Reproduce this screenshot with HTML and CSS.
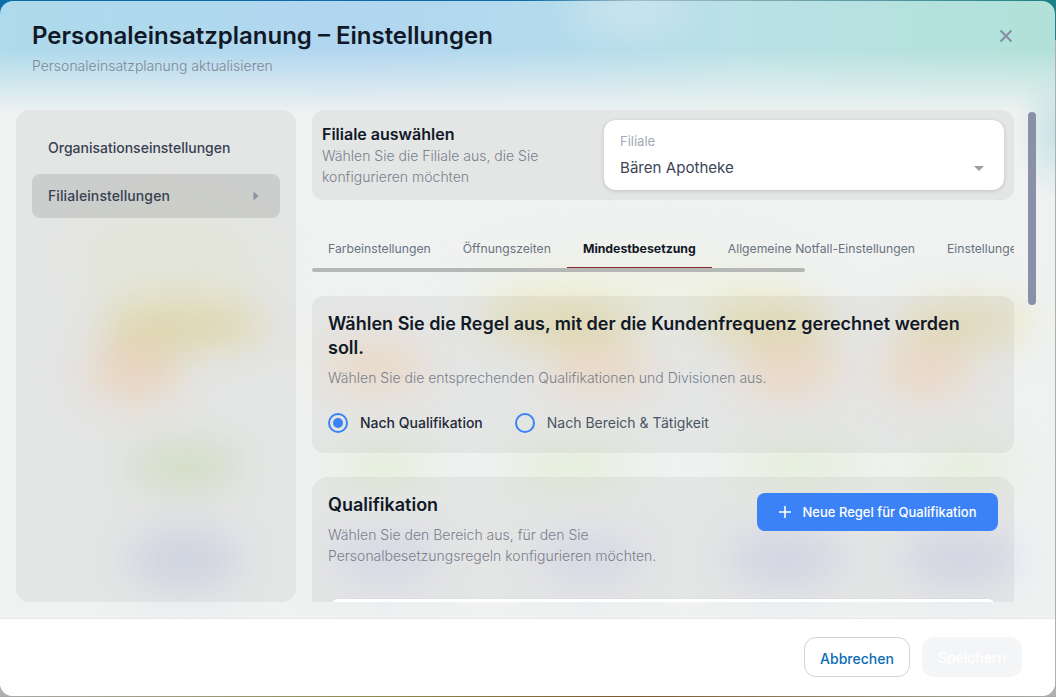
FILE: index.html
```html
<!DOCTYPE html>
<html lang="de">
<head>
<meta charset="utf-8">
<title>Personaleinsatzplanung – Einstellungen</title>
<link rel="stylesheet" href="styles.css">
</head>
<body>
<div class="modal">
  <header class="head">
    <div>
      <h1 class="title">Personaleinsatzplanung – Einstellungen</h1>
      <p class="subtitle">Personaleinsatzplanung aktualisieren</p>
    </div>
    <svg class="close" width="14" height="14" viewBox="0 0 14 14" fill="none" stroke="#868ca3" stroke-width="2"><path d="M1.5 1.5l11 11M12.5 1.5l-11 11"/></svg>
  </header>
  <div class="body">
    <nav class="side">
      <div class="side-item">Organisationseinstellungen</div>
      <div class="side-item active">Filialeinstellungen
        <svg width="6" height="10" viewBox="0 0 6 10" fill="#8a90a6"><path d="M0.5 0.5L5.5 5L0.5 9.5z"/></svg>
      </div>
    </nav>
    <main class="content">
      <section class="branch">
        <div class="branch-text">
          <h2 class="branch-title">Filiale auswählen</h2>
          <p class="desc branch-desc">Wählen Sie die Filiale aus, die Sie konfigurieren möchten</p>
        </div>
        <div class="select">
          <div class="select-label">Filiale</div>
          <div class="select-row">Bären Apotheke
            <svg width="10" height="5" viewBox="0 0 10 5" fill="#9a9ea8"><path d="M0 0h10L5 5z"/></svg>
          </div>
        </div>
      </section>
      <div class="tabs-wrap">
        <div class="tabs">
          <span class="tab">Farbeinstellungen</span>
          <span class="tab">Öffnungszeiten</span>
          <span class="tab selected">Mindestbesetzung</span>
          <span class="tab">Allgemeine Notfall-Einstellungen</span>
          <span class="tab">Einstellungen</span>
        </div>
        <div class="tabs-bar"></div>
      </div>
      <section class="card rule">
        <h2 class="card-title">Wählen Sie die Regel aus, mit der die Kundenfrequenz gerechnet werden soll.</h2>
        <p class="desc rule-desc">Wählen Sie die entsprechenden Qualifikationen und Divisionen aus.</p>
        <div class="radios">
          <div class="radio-item strong"><span class="radio on"></span>Nach Qualifikation</div>
          <div class="radio-item"><span class="radio"></span>Nach Bereich &amp; Tätigkeit</div>
        </div>
      </section>
      <section class="card qual">
        <div class="qual-top">
          <div class="qual-text">
            <h2 class="card-title">Qualifikation</h2>
            <p class="desc qual-desc">Wählen Sie den Bereich aus, für den Sie Personalbesetzungsregeln konfigurieren möchten.</p>
          </div>
          <button class="primary"><svg width="12" height="12" viewBox="0 0 12 12" stroke="#fff" stroke-width="1.6" fill="none"><path d="M6 0v12M0 6h12"/></svg>Neue Regel für Qualifikation</button>
        </div>
        <div class="inner"></div>
      </section>
    </main>
    <div class="scroll"><div class="thumb"></div></div>
  </div>
  <footer class="foot">
    <button class="ghost">Abbrechen</button>
    <button class="save">Speichern</button>
  </footer>
</div>
</body>
</html>
```

FILE: styles.css
```css
* { box-sizing: border-box; }
html, body { margin: 0; height: 100%; }
body {
  width: 1056px;
  height: 697px;
  overflow: hidden;
  font-family: Inter, "Liberation Sans", sans-serif;
  background:
    linear-gradient(to right, #0a6ea8, #0a6ea8 50%, #a8bcc4 60%, #1c7f86) top / 100% 40px no-repeat,
    linear-gradient(to right, #a8a8a8, #8f8a50 35%, #7a5a30 60%, #9a9a8a 90%, #a8a8a8) bottom / 100% 1px no-repeat,
    #acb0b0;
  color: #111827;
  padding-top: 1px;
}
.modal {
  position: relative;
  width: 1055px;
  height: 695px;
  border-radius: 13px;
  overflow: hidden;
  display: flex;
  flex-direction: column;
  background:
    radial-gradient(ellipse 40px 70px at 1056px 130px, rgba(190,222,226,0.8), rgba(190,222,226,0)),
    linear-gradient(to bottom, rgba(239,242,243,0) 48px, #eff2f1 112px),
    linear-gradient(to right, #aedaeb, #b1d6f0 35%, #b4dcec 55%, #b9e1e6 70%, #b1e1d8 100%),
    #eff2f1;
  background-repeat: no-repeat;
}
.modal::before {
  content: "";
  position: absolute;
  inset: 0;
  filter: blur(20px);
  background-repeat: no-repeat;
  background-image:
    radial-gradient(ellipse 88px 22px at 185px 325px, #e6dfb0 92%, rgba(230,223,176,0) 100%),
    radial-gradient(ellipse 50px 36px at 135px 370px, #f3dfcb 92%, rgba(243,223,203,0) 100%),
    radial-gradient(ellipse 60px 24px at 185px 465px, #dae6cb 92%, rgba(218,230,203,0) 100%),
    radial-gradient(ellipse 62px 34px at 185px 558px, #d9deec 92%, rgba(217,222,236,0) 100%),
    radial-gradient(ellipse 80px 22px at 560px 322px, #e8e2b8 92%, rgba(232,226,184,0) 100%),
    radial-gradient(ellipse 70px 22px at 770px 322px, #e8e2b8 92%, rgba(232,226,184,0) 100%),
    radial-gradient(ellipse 70px 22px at 965px 322px, #e8e2bc 92%, rgba(232,226,188,0) 100%),
    radial-gradient(ellipse 55px 30px at 375px 365px, #f5e4d3 92%, rgba(245,228,211,0) 100%),
    radial-gradient(ellipse 55px 30px at 600px 368px, #f5e4d3 92%, rgba(245,228,211,0) 100%),
    radial-gradient(ellipse 55px 30px at 790px 370px, #f5e2d0 92%, rgba(245,226,208,0) 100%),
    radial-gradient(ellipse 50px 30px at 925px 370px, #f5e2d0 92%, rgba(245,226,208,0) 100%),
    radial-gradient(ellipse 55px 22px at 385px 465px, #e4eed8 92%, rgba(228,238,216,0) 100%),
    radial-gradient(ellipse 70px 22px at 570px 465px, #e4eed8 92%, rgba(228,238,216,0) 100%),
    radial-gradient(ellipse 70px 22px at 800px 465px, #e4eed8 92%, rgba(228,238,216,0) 100%),
    radial-gradient(ellipse 55px 22px at 965px 468px, #e4eed8 92%, rgba(228,238,216,0) 100%),
    radial-gradient(ellipse 60px 30px at 385px 558px, #e0e3f0 92%, rgba(224,227,240,0) 100%),
    radial-gradient(ellipse 60px 30px at 590px 558px, #e0e3f0 92%, rgba(224,227,240,0) 100%),
    radial-gradient(ellipse 65px 32px at 785px 558px, #dce0ef 92%, rgba(220,224,239,0) 100%),
    radial-gradient(ellipse 65px 32px at 960px 558px, #dce0ef 92%, rgba(220,224,239,0) 100%),
    radial-gradient(ellipse 60px 14px at 630px 10px, #dceaf1 92%, rgba(220,234,241,0) 100%),
    radial-gradient(ellipse 170px 40px at 640px 290px, #eef1e4 92%, rgba(238,241,228,0) 100%),
    radial-gradient(ellipse 100px 60px at 170px 260px, #eef1e4 92%, rgba(238,241,228,0) 100%);
}
.head {
  position: relative;
  height: 109px;
  flex: none;
  padding: 22px 42px 0 32px;
  display: flex;
  justify-content: space-between;
}
.title {
  margin: 0;
  font-size: 24px;
  line-height: 26px;
  font-weight: 600;
  color: #111827;
}
.subtitle {
  margin: 7px 0 0;
  font-size: 14px;
  line-height: 20px;
  font-weight: 300;
  color: #7f8797;
}
.close { margin-top: 6px; }
.body {
  position: relative;
  height: 492px;
  flex: none;
  padding-left: 16px;
  display: flex;
}
.side {
  width: 280px;
  flex: none;
  padding: 16px;
  border-radius: 14px;
  background: rgba(30, 20, 10, 0.05);
  display: flex;
  flex-direction: column;
  gap: 4px;
}
.side-item {
  height: 44px;
  padding: 0 21px 2px 16px;
  display: flex;
  align-items: center;
  justify-content: space-between;
  font-size: 14px;
  font-weight: 500;
  color: #374151;
  border-radius: 8px;
}
.side-item svg { margin-top: 2px; }
.side-item.active {
  background: rgba(0, 0, 0, 0.1);
  letter-spacing: 0.1px;
}
.content {
  width: 702px;
  margin-left: 16px;
  flex: none;
  overflow: hidden;
}
.branch {
  height: 90px;
  padding: 10px;
  border-radius: 12px;
  background: rgba(30, 20, 10, 0.05);
  display: flex;
  justify-content: space-between;
}
.branch-text { width: 240px; padding-top: 4px; }
.branch-title {
  margin: 0;
  font-size: 16px;
  line-height: 20px;
  font-weight: 600;
}
.desc {
  margin: 0;
  font-size: 14px;
  line-height: 21px;
  font-weight: 300;
  color: #7a7f8c;
}
.branch-desc { margin-top: 1px; }
.select {
  width: 400px;
  height: 70px;
  padding: 13px 16px 0;
  background: #fff;
  border-radius: 12px;
  box-shadow: 0 1px 4px rgba(0, 0, 0, 0.16);
}
.select-label {
  font-size: 13px;
  line-height: 16px;
  color: #a4a9b6;
}
.select-row {
  margin-top: 7px;
  padding-right: 4px;
  display: flex;
  align-items: center;
  justify-content: space-between;
  font-size: 15.1px;
  line-height: 24px;
  color: #3d4557;
}
.select-row svg { margin-top: 1px; }
.tabs-wrap {
  height: 72px;
  padding-top: 32px;
  overflow: hidden;
}
.tabs {
  height: 36px;
  display: flex;
  white-space: nowrap;
}
.tab {
  flex: none;
  padding: 0 16px;
  font-size: 12.2px;
  line-height: 34px;
  color: #6b7280;
}
.tab.selected {
  font-size: 12.3px;
  font-weight: 700;
  color: #111827;
  border-bottom: 1px solid #8c2a2d;
  height: 36px;
}
.tabs-bar {
  width: 493px;
  height: 4px;
  border-radius: 2px;
  background: #b5b8b4;
}
.card {
  background: rgba(30, 20, 10, 0.05);
  padding: 16px;
}
.rule {
  margin-top: 24px;
  height: 157px;
  border-radius: 12px;
}
.card-title {
  margin: 0;
  font-size: 18px;
  line-height: 24px;
  font-weight: 600;
}
.rule-desc { margin-top: 7px; }
.radios {
  margin-top: 25px;
  display: flex;
  gap: 32px;
}
.radio-item {
  display: flex;
  align-items: center;
  gap: 12px;
  font-size: 14px;
  line-height: 20px;
  color: #4b5563;
}
.radio-item.strong { font-weight: 500; color: #1f2937; }
.radio {
  width: 20px;
  height: 20px;
  border-radius: 50%;
  border: 2px solid #3b82f6;
  padding: 3px;
  background-clip: content-box;
}
.radio.on { background-color: #3b82f6; }
.qual {
  margin-top: 24px;
  height: 200px;
  border-radius: 16px;
}
.qual-top {
  display: flex;
  justify-content: space-between;
  align-items: flex-start;
  min-height: 74px;
}
.qual-text { width: 345px; }
.qual-desc { margin-top: 7px; }
.primary {
  width: 241px;
  height: 38px;
  border: 0;
  border-radius: 8px;
  background: #3b82f6;
  color: #fff;
  font: 500 13px Inter, "Liberation Sans", sans-serif;
  display: flex;
  align-items: center;
  justify-content: center;
  gap: 12px;
}
.inner {
  margin: 32px 2px 0;
  height: 60px;
  background: #fff;
  border-radius: 8px;
  box-shadow: 0 1px 3px rgba(0, 0, 0, 0.15);
}
.scroll {
  width: 8px;
  margin-left: 14px;
  padding-top: 2px;
  flex: none;
}
.thumb {
  height: 193px;
  border-radius: 4px;
  background: #8a90a8;
}
.foot {
  position: relative;
  margin-top: 16px;
  flex: 1;
  background: #fff;
  border-top: 1px solid #e6e8ec;
  padding: 18px 33px 0 0;
  display: flex;
  justify-content: flex-end;
  align-items: flex-start;
  gap: 12px;
}
.ghost, .save {
  height: 40px;
  border-radius: 12px;
  font: 500 14px Inter, "Liberation Sans", sans-serif;
}
.ghost {
  width: 106px;
  padding-top: 3px;
  background: #fff;
  border: 1px solid #cfd2da;
  color: #0b6cb5;
}
.save {
  width: 100px;
  background: #f4f5f7;
  border: 0;
  color: #fff;
}
```
